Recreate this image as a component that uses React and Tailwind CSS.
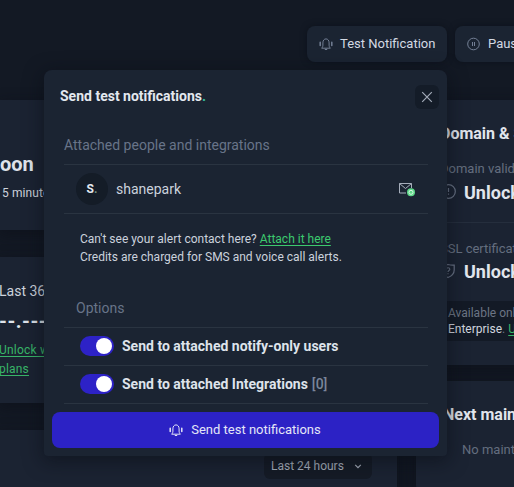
function BellIcon({ className }) {
  return (
    <svg viewBox="0 0 14 14" className={className} fill="none" stroke="currentColor" strokeLinecap="round" strokeLinejoin="round">
      <path d="M2.900 10.900c.8-.9 1-1.700 1-2.900V5.900C3.900 3.500 5.100 1.900 7 1.900s3.100 1.600 3.100 4V8c0 1.200.2 2 1 2.900Z" />
      <path d="M6.200 12.500h1.600" />
      <path d="M1.200 5.200v3.200M12.800 5.200v3.200" strokeWidth="1.5" />
    </svg>
  );
}

function Card({ className, children }) {
  return <div className={`shrink-0 bg-[#1b2332] shadow-[0_4px_14px_2px_rgba(10,14,22,0.45)] ${className}`}>{children}</div>;
}

function HeaderBar() {
  return (
    <header className="flex h-[100px] shrink-0 gap-2 pl-[307px] pt-[26px] text-[13px] text-[#d3d9e3]">
      <div className="flex h-9 w-[140px] shrink-0 items-center rounded-lg bg-[#1b2432] pl-3 shadow-[0_0_6px_rgba(8,12,20,0.5)]">
        <BellIcon className="mr-[7px] h-3.5 w-3.5 text-[#748096]" />
        Test Notification
      </div>
      <div className="flex h-9 w-[100px] shrink-0 items-center rounded-lg bg-[#1b2432] pl-3 shadow-[0_0_6px_rgba(8,12,20,0.5)]">
        <svg viewBox="0 0 14 14" className="mr-[7px] h-3.5 w-3.5 text-[#748096]" fill="none" stroke="currentColor">
          <circle cx="6.5" cy="7" r="5.8" />
          <path d="M5.5 5v4M7.5 5v4" />
        </svg>
        Pause
      </div>
    </header>
  );
}

function LeftColumn() {
  return (
    <div className="flex w-[397px] shrink-0 flex-col gap-[27px]">
      <Card className="h-[130px] whitespace-nowrap rounded-r-md pt-[51px]">
        <div className="text-[20px] font-bold leading-[26px] text-[#dfe3ea]">oon</div>
        <div className="pl-0.5 pt-[7px] text-[12px] leading-[18px] tracking-[0.1px] text-[#cdd2dc]">5 minutes</div>
      </Card>
      <Card className="h-[146px] whitespace-nowrap rounded-r-md pt-[25px]">
        <div className="-ml-px text-[14px] leading-[18px] text-[#cdd2dc]">Last 365</div>
        <div className="-ml-px h-[41px] pt-[8px] text-[20px] font-bold leading-[26px] tracking-[0.5px] text-[#dfe3ea]">--.---%</div>
        <div className="-ml-px text-[12px] leading-[19px] tracking-[0.2px] text-[#38b568] underline underline-offset-2">
          Unlock with
          <br />
          plans
        </div>
      </Card>
      <Card className="flex h-[80px] justify-end rounded-r-md pr-[25px] pt-[23px]">
        <div className="flex h-[26px] w-[108px] items-center justify-between rounded-md bg-[#151b26] pl-[7px] pr-[9px] text-[12px] text-[#a6adba]">
          <span>Last 24 hours</span>
          <svg viewBox="0 0 10 10" className="h-2.5 w-2.5" fill="none" stroke="currentColor" strokeWidth="1.2">
            <path d="m2.2 3.8 2.8 2.8 2.8-2.8" />
          </svg>
        </div>
      </Card>
    </div>
  );
}

function RightColumn() {
  return (
    <div className="flex w-[200px] shrink-0 flex-col gap-4 whitespace-nowrap">
      <Card className="h-[265px] rounded-md pl-6 pt-6">
        <div className="text-[16px] font-bold leading-5 text-[#e1e5ec]">Domain &amp; SSL</div>
        <div className="mt-4 text-[13px] leading-[18px] text-[#646e7f]">Domain valid until</div>
        <div className="mt-[2px] flex h-6 items-center text-[18px] font-bold text-[#e1e5ec]">
          <svg viewBox="0 0 16 16" className="mr-2 h-4 w-4 text-[#687285]" fill="none" stroke="currentColor" strokeWidth="1.2">
            <circle cx="8.500" cy="7.500" r="6.8" />
            <path d="M8.500 4v4M8.500 9.500v1.200" />
          </svg>
          Unlock
        </div>
        <div className="mt-[18px] border-t border-[#252e3d] pt-[17px] text-[13px] leading-[18px] text-[#646e7f]">SSL certificate</div>
        <div className="mt-px flex h-6 items-center text-[18px] font-bold text-[#e1e5ec]">
          <svg viewBox="0 0 16 16" className="mr-2 h-4 w-4 text-[#687285]" fill="none" stroke="currentColor" strokeWidth="1.2">
            <path d="M8 1.5c2 .6 4.2.9 6.2.6v4.8c0 3.5-2.5 6-6.2 7.6-3.7-1.6-6.2-4.1-6.2-7.6V2.1c2 .3 4.2 0 6.2-.6Z" />
            <path d="M6.3 6.2c.2-2 3.5-1.8 3.5 0C9.8 7.5 8 7.5 8 9M8 10.3v1" />
          </svg>
          Unlock
        </div>
        <div className="mt-[18px] rounded-md bg-[#131a26] pb-1 pl-2 pt-1 text-[12px] leading-4 text-[#6c7585]">
          Available only in
          <br />
          <span className="text-[#d0d5de]">Enterprise</span>. <span className="text-[#38b568] underline underline-offset-2">Upgrade</span>
        </div>
      </Card>
      <Card className="h-[110px] rounded-md pl-[26px] pt-6">
        <div className="pl-px text-[16px] font-bold leading-5 text-[#e1e5ec]">Next maintenance</div>
        <div className="mt-4 pl-5 text-[13px] leading-[18px] text-[#646e7f]">No maintenance</div>
      </Card>
    </div>
  );
}

function ToggleRow({ children }) {
  return (
    <div className="flex h-[38px] items-center border-b border-[#2a3441] pl-4 text-[14px] font-bold text-[#dee3eb]">
      <div className="mb-px mr-2 flex h-5 w-[34px] shrink-0 items-center justify-end rounded-full bg-[#2d22c7] pr-[2px]">
        <div className="h-4 w-4 rounded-full bg-white" />
      </div>
      {children}
    </div>
  );
}

function Modal() {
  return (
    <section className="absolute left-[44px] top-[70px] flex h-[386px] w-[403px] flex-col rounded-t-lg rounded-b-sm bg-[#1b2432] px-2 pb-2 shadow-[0_4px_18px_2px_rgba(8,12,20,0.5)]">
      <div className="flex h-[50px] items-center justify-between pl-2">
        <h2 className="pt-[2px] text-[14px] font-bold text-[#e3e8ef]">
          Send test notifications<span className="text-[#36bd9b]">.</span>
        </h2>
        <button className="mt-[4px] flex h-6 w-6 items-center justify-center rounded-md bg-[#141c28]">
          <svg viewBox="0 0 12 12" className="h-3 w-3 text-[#a3abb8]" fill="none" stroke="currentColor" strokeWidth="1.2">
            <path d="m1.2 1.2 9.600 9.600M10.800 1.200l-9.600 9.600" />
          </svg>
        </button>
      </div>

      <div className="ml-3 mr-[11px] flex flex-col">
        <h3 className="h-[45px] border-b border-[#2a3441] pt-[15px] text-[14px] leading-[20px] text-[#687489]">Attached people and integrations</h3>
        <div className="flex h-[49px] items-center border-b border-[#2a3441] pl-3 pr-[13px]">
          <div className="flex h-8 w-8 items-center justify-center rounded-full bg-[#141c27] text-[12px] font-bold text-[#e3e8ef]">
            S<span className="text-[#6c8f88]">.</span>
          </div>
          <span className="ml-2 text-[14px] text-[#cbd2dd]">shanepark</span>
          <svg viewBox="0 0 18 16" className="ml-auto h-4 w-[18px]">
            <path d="M14.5 7V2.5h-12v9.5H9M2.500 2.500l6 5 6-5" fill="none" stroke="#a5adba" />
            <circle cx="14" cy="11.300" r="4" fill="#5fd98a" />
            <circle cx="14" cy="11.300" r="2" fill="#5fd98a" stroke="#d9f9e4" />
          </svg>
        </div>
        <p className="h-[79px] pl-4 pt-4 text-[12px] leading-[18px] text-[#cbd2dd]">
          Can't see your alert contact here? <a className="text-[#3cc96e] underline underline-offset-2">Attach it here</a>
          <br />
          Credits are charged for SMS and voice call alerts.
        </p>
        <h3 className="h-[35px] border-b border-[#2a3441] pl-3 pt-[5px] text-[14px] leading-5 text-[#687489]">Options</h3>
        <ToggleRow>Send to attached notify-only users</ToggleRow>
        <ToggleRow>
          Send to attached Integrations <span className="ml-1 font-medium text-[#7a869a]">[0]</span>
        </ToggleRow>
      </div>

      <button className="mt-auto flex h-9 shrink-0 items-center justify-center gap-2 rounded-lg bg-[#2c22c5] pr-px text-[13px] text-[#e4e6f7]">
        <BellIcon className="h-3.5 w-3.5" />
        Send test notifications
      </button>
    </section>
  );
}

export default function App() {
  return (
    <main className="relative flex h-[487px] w-[514px] flex-col overflow-hidden bg-[#131924] font-['Roboto','Liberation_Sans',sans-serif]">
      <HeaderBar />
      <div className="flex gap-[19px]">
        <LeftColumn />
        <RightColumn />
      </div>
      <Modal />
    </main>
  );
}
